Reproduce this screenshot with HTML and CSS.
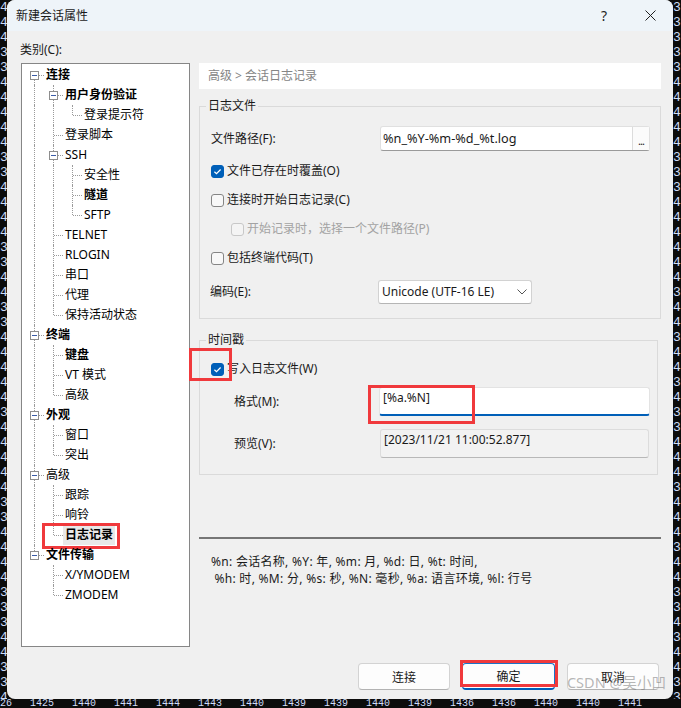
FILE: index.html
```html
<!DOCTYPE html>
<html lang="zh-CN">
<head>
<meta charset="utf-8">
<title>新建会话属性</title>
<link rel="stylesheet" href="styles.css">
</head>
<body>
<div class="screen">
<div class="term term-left">4
4
4
3
3
4
4
4
4
4
3
3
4
4
4
4
3
3
4
4
3
3
4
4
4
4
4
3
4
4
4
4
4
3
3
4
4
4
4
3
3
3
4
4
3
3
4</div>
<div class="dialog">
  <div class="titlebar">
    <span class="title">新建会话属性</span>
    <span class="tb-btn tb-help">?</span>
    <span class="tb-btn"><svg width="11" height="11" viewBox="0 0 11 11"><path d="M0.5 0.5L10.5 10.5M10.5 0.5L0.5 10.5" stroke="#1f1f1f" stroke-width="1" fill="none"/></svg></span>
  </div>
  <div class="content">
    <div class="cat-label">类别(C):</div>
    <div class="tree">
      <div class="row"><span class="c f"><i class="box"></i></span><span class="txt b">连接</span></div>
      <div class="row"><span class="c v"></span><span class="c t"><i class="box"></i></span><span class="txt b">用户身份验证</span></div>
      <div class="row"><span class="c v"></span><span class="c v"></span><span class="c l"></span><span class="txt">登录提示符</span></div>
      <div class="row"><span class="c v"></span><span class="c t"></span><span class="txt">登录脚本</span></div>
      <div class="row"><span class="c v"></span><span class="c t"><i class="box"></i></span><span class="txt">SSH</span></div>
      <div class="row"><span class="c v"></span><span class="c v"></span><span class="c t"></span><span class="txt">安全性</span></div>
      <div class="row"><span class="c v"></span><span class="c v"></span><span class="c t"></span><span class="txt b">隧道</span></div>
      <div class="row"><span class="c v"></span><span class="c v"></span><span class="c l"></span><span class="txt">SFTP</span></div>
      <div class="row"><span class="c v"></span><span class="c t"></span><span class="txt">TELNET</span></div>
      <div class="row"><span class="c v"></span><span class="c t"></span><span class="txt">RLOGIN</span></div>
      <div class="row"><span class="c v"></span><span class="c t"></span><span class="txt">串口</span></div>
      <div class="row"><span class="c v"></span><span class="c t"></span><span class="txt">代理</span></div>
      <div class="row"><span class="c v"></span><span class="c l"></span><span class="txt">保持活动状态</span></div>
      <div class="row"><span class="c t"><i class="box"></i></span><span class="txt b">终端</span></div>
      <div class="row"><span class="c v"></span><span class="c t"></span><span class="txt b">键盘</span></div>
      <div class="row"><span class="c v"></span><span class="c t"></span><span class="txt">VT 模式</span></div>
      <div class="row"><span class="c v"></span><span class="c l"></span><span class="txt">高级</span></div>
      <div class="row"><span class="c t"><i class="box"></i></span><span class="txt b">外观</span></div>
      <div class="row"><span class="c v"></span><span class="c t"></span><span class="txt">窗口</span></div>
      <div class="row"><span class="c v"></span><span class="c l"></span><span class="txt">突出</span></div>
      <div class="row"><span class="c t"><i class="box"></i></span><span class="txt">高级</span></div>
      <div class="row"><span class="c v"></span><span class="c t"></span><span class="txt">跟踪</span></div>
      <div class="row"><span class="c v"></span><span class="c t"></span><span class="txt">响铃</span></div>
      <div class="row"><span class="c v"></span><span class="c l"></span><span class="txt b sel">日志记录</span><span class="mark mark-tree"></span></div>
      <div class="row"><span class="c l"><i class="box"></i></span><span class="txt b">文件传输</span></div>
      <div class="row"><span class="c"></span><span class="c t"></span><span class="txt">X/YMODEM</span></div>
      <div class="row"><span class="c"></span><span class="c l"></span><span class="txt">ZMODEM</span></div>
    </div>
    <div class="panel">
      <div class="crumb">高级 &gt; 会话日志记录</div>
      <fieldset class="group g1">
        <legend>日志文件</legend>
        <div class="gbody gbody1">
          <div class="frow path-row">
            <span class="flabel">文件路径(F):</span>
            <div class="field path-field"><span class="field-text">%n_%Y-%m-%d_%t.log</span><span class="browse">...</span></div>
          </div>
          <div class="chk first"><span class="cb on"><svg width="13" height="13" viewBox="0 0 13 13"><path d="M3.4 6.7L5.5 8.7L9.6 4.5" stroke="#fff" stroke-width="1.2" fill="none"/></svg></span><span>文件已存在时覆盖(O)</span></div>
          <div class="chk"><span class="cb"></span><span>连接时开始日志记录(C)</span></div>
          <div class="chk sub disabled"><span class="cb"></span><span>开始记录时，选择一个文件路径(P)</span></div>
          <div class="chk"><span class="cb"></span><span>包括终端代码(T)</span></div>
          <div class="frow enc-row">
            <span class="flabel enc-label">编码(E):</span>
            <div class="select"><span class="select-text">Unicode (UTF-16 LE)</span><svg width="10" height="6" viewBox="0 0 10 6"><path d="M0.5 0.5L5 5L9.5 0.5" stroke="#555" stroke-width="1" fill="none"/></svg></div>
          </div>
        </div>
      </fieldset>
      <fieldset class="group g2">
        <legend>时间戳</legend>
        <div class="gbody gbody2">
          <div class="chk ts-chk"><span class="cb on"><svg width="13" height="13" viewBox="0 0 13 13"><path d="M3.4 6.7L5.5 8.7L9.6 4.5" stroke="#fff" stroke-width="1.2" fill="none"/></svg></span><span>写入日志文件(W)</span><span class="mark mark-chk"></span></div>
          <div class="frow fmt-row">
            <span class="flabel wide">格式(M):</span>
            <div class="field fmt-field"><span class="field-text">[%a.%N]</span><span class="mark mark-fmt"></span></div>
          </div>
          <div class="frow pv-row">
            <span class="flabel wide">预览(V):</span>
            <div class="field pv-field"><span class="field-text">[2023/11/21 11:00:52.877]</span></div>
          </div>
        </div>
      </fieldset>
      <div class="sep"></div>
      <div class="help">
        <div>%n: 会话名称, %Y: 年, %m: 月, %d: 日, %t: 时间,</div>
        <div class="help2"> %h: 时, %M: 分, %s: 秒, %N: 毫秒, %a: 语言环境, %l: 行号</div>
      </div>
    </div>
  </div>
  <div class="footer">
    <div class="btn w92">连接</div>
    <div class="btn w93 default">确定<span class="mark mark-btn"></span></div>
    <div class="btn w92">取消</div>
    <span class="watermark">CSDN @吴小凹</span>
  </div>
</div>
<div class="term term-right">3
3
3
3
3
4
4
4
4
4
3
3
3
4
4
4
4
4
4
3
4
4
3
4
4
3
4
3
3
4
4
4
3
4
4
4
3
4
4
3
3
4
3
4
4
3
3</div>
<div class="term term-bottom">26   1425   1440   1441   1444   1443   1440   1439   1439   1440   1439   1436   1436   1440   1440   1441</div>
</div>
</body>
</html>
```

FILE: styles.css
```css
html, body {
  margin: 0;
  padding: 0;
  background: #0c0c0c;
}

body {
  font-family: "Noto Sans", "Noto Sans CJK SC", sans-serif;
  font-size: 12px;
  color: #1a1a1a;
}

.screen {
  display: grid;
  grid-template-columns: 7px 666px 8px;
  grid-template-rows: 699px 9px;
  width: 681px;
  height: 708px;
  overflow: hidden;
}

.term {
  font-family: "Liberation Mono", monospace;
  color: #cfdcf8;
  white-space: pre;
  overflow: hidden;
}

.term-left {
  font-size: 13px;
  line-height: 15px;
  text-align: right;
}

.term-right {
  font-size: 13px;
  line-height: 15px;
}

.term-bottom {
  grid-column: 1 / -1;
  font-size: 10px;
  line-height: 10px;
}

/* dialog */
.dialog {
  background: #f0f0f0;
  border-radius: 8px;
  display: flex;
  flex-direction: column;
  overflow: hidden;
  position: relative;
}

.titlebar {
  height: 31px;
  flex: none;
  background: #eef4f9;
  display: flex;
  align-items: center;
}

.title {
  flex: 1;
  padding-left: 9px;
  line-height: 16px;
  color: #1a1a1a;
}

.tb-btn {
  width: 46px;
  height: 31px;
  display: flex;
  align-items: center;
  justify-content: center;
}

.tb-help {
  font-size: 14px;
  color: #1f1f1f;
}

.content {
  display: grid;
  grid-template-columns: 169px 462px;
  grid-template-rows: 21px 584px;
  column-gap: 9px;
  padding: 11px 0 0 14px;
}

.cat-label {
  grid-row: 1;
  grid-column: 1;
  line-height: 16px;
  margin-left: -1px;
}

/* tree */
.tree {
  grid-row: 2;
  grid-column: 1;
  box-sizing: border-box;
  background: #fff;
  border: 1px solid #868686;
  padding: 1px 0 0 3px;
  overflow: hidden;
}

.row {
  display: flex;
  align-items: center;
  height: 20px;
  position: relative;
  color: #000;
}

.c {
  width: 19px;
  height: 20px;
  flex: none;
  position: relative;
}

.c.v::before,
.c.t::before,
.c.l::before,
.c.f::before {
  content: "";
  position: absolute;
  left: 9px;
  border-left: 1px dotted #9a9a9a;
}

.c.v::before,
.c.t::before {
  top: 0;
  bottom: 0;
}

.c.l::before {
  top: 0;
  height: 10px;
}

.c.f::before {
  top: 10px;
  bottom: 0;
}

.c.t::after,
.c.l::after,
.c.f::after {
  content: "";
  position: absolute;
  left: 10px;
  right: 0;
  top: 10px;
  border-top: 1px dotted #9a9a9a;
}

.box {
  position: absolute;
  left: 5px;
  top: 6px;
  width: 9px;
  height: 9px;
  box-sizing: border-box;
  border: 1px solid #8e8e8e;
  background: #fff;
  z-index: 1;
}

.box::after {
  content: "";
  position: absolute;
  left: 1px;
  top: 3px;
  width: 5px;
  height: 1px;
  background: #3a5ca8;
}

.txt {
  padding: 0 2px;
  line-height: 20px;
  white-space: nowrap;
}

.txt.b {
  font-weight: 700;
}

.txt.sel {
  background: #e8e8e8;
}

/* red annotation marks */
.mark {
  position: absolute;
  box-sizing: border-box;
  border: 3px solid #f0393c;
  pointer-events: none;
}

.mark-tree {
  left: 17px;
  top: -2px;
  width: 78px;
  height: 26px;
}

.mark-chk {
  left: -22px;
  top: -11px;
  width: 43px;
  height: 33px;
}

.mark-fmt {
  left: -12px;
  top: -3px;
  width: 107px;
  height: 39px;
}

.mark-btn {
  left: -3px;
  top: -4px;
  width: 98px;
  height: 27px;
}

/* right panel */
.panel {
  grid-row: 2;
  grid-column: 2;
  display: flex;
  flex-direction: column;
}

.crumb {
  height: 26px;
  line-height: 26px;
  background: #fff;
  padding-left: 9px;
  color: #858585;
}

.group {
  box-sizing: border-box;
  margin: 0;
  padding: 0;
  border: 1px solid #dadada;
  min-inline-size: 0;
}

.group legend {
  margin-left: 6px;
  padding: 0 2px;
  line-height: 16px;
  color: #1a1a1a;
}

.g1 {
  width: 462px;
  margin-top: 9px;
}

.g2 {
  width: 459px;
  margin-top: 13px;
}

.gbody {
  display: flex;
  flex-direction: column;
}

.gbody1 {
  padding: 12px 10px 14px 11px;
}

.gbody2 {
  padding: 11px 7px 16px 11px;
}

.frow {
  display: flex;
  align-items: center;
}

.flabel {
  flex: none;
  width: 169px;
  line-height: 16px;
}

.enc-label {
  width: 168px;
  margin-left: -1px;
}

.path-row {
  height: 25px;
}

.field {
  position: relative;
  box-sizing: border-box;
  background: #fff;
  border: 1px solid #e0e0e0;
  border-bottom-color: #9a9a9a;
  border-radius: 3px;
  display: flex;
}

.field-text {
  flex: 1;
  padding-left: 2px;
  white-space: nowrap;
  color: #1a1a1a;
}

.path-field {
  width: 270px;
  height: 25px;
  align-items: center;
}

.path-field .field-text {
  line-height: 23px;
  font-size: 12.7px;
}

.browse {
  flex: none;
  width: 17px;
  height: 23px;
  box-sizing: border-box;
  border-left: 1px solid #dcdcdc;
  background: #fbfbfb;
  text-align: center;
  line-height: 28px;
  font-size: 11px;
  letter-spacing: -1px;
}

.chk {
  display: flex;
  align-items: center;
  gap: 3px;
  height: 20px;
  margin-top: 9px;
  line-height: 16px;
  position: relative;
}

.chk.first {
  margin-top: 10px;
}

.chk.sub {
  padding-left: 20px;
}

.chk.disabled {
  color: #a3a3a3;
}

.cb {
  flex: none;
  width: 13px;
  height: 13px;
  box-sizing: border-box;
  border: 1px solid #858585;
  border-radius: 3px;
  background: #f8f8f8;
  display: flex;
}

.cb svg {
  margin: -1px;
}

.cb.on {
  background: #005fb8;
  border-color: #005fb8;
}

.chk.disabled .cb {
  border-color: #c8c8c8;
  background: #f4f4f4;
}

.enc-row {
  margin-top: 12px;
  height: 24px;
}

.select {
  box-sizing: border-box;
  width: 154px;
  height: 24px;
  background: #fff;
  border: 1px solid #d2d2d2;
  border-bottom-color: #b5b5b5;
  border-radius: 3px;
  display: flex;
  align-items: center;
  padding: 0 4px 0 3px;
}

.select-text {
  flex: 1;
  line-height: 16px;
  white-space: nowrap;
}

.ts-chk {
  margin-top: 0;
}

.flabel.wide {
  width: 145px;
  padding-left: 23px;
}

.fmt-row {
  margin-top: 8px;
  height: 29px;
}

.fmt-field {
  width: 271px;
  height: 29px;
  border-color: #e3e3e3;
  border-bottom: 2px solid #005fb8;
  padding-top: 2px;
}

.fmt-field .field-text,
.pv-field .field-text {
  line-height: 16px;
  padding-left: 3px;
}

.pv-row {
  margin-top: 13px;
  height: 29px;
}

.pv-field {
  width: 269px;
  height: 29px;
  margin-left: 1px;
  background: #f2f2f2;
  border-color: #dcdcdc;
  border-bottom-color: #b8b8b8;
  padding-top: 2px;
}

.sep {
  margin-top: 62px;
  height: 2px;
  background: #767676;
}

.help {
  margin-top: 14px;
  padding-left: 12px;
  line-height: 17px;
  letter-spacing: 0.3px;
  color: #1a1a1a;
}

.help2 {
  white-space: pre;
}

/* footer */
.footer {
  position: relative;
  margin-top: 16px;
  display: flex;
  justify-content: flex-end;
  gap: 12px;
  padding-right: 14px;
}

.btn {
  position: relative;
  box-sizing: border-box;
  height: 27px;
  background: #fdfdfd;
  border: 1px solid #d3d3d3;
  border-bottom-color: #b3b3b3;
  border-radius: 4px;
  display: flex;
  align-items: center;
  justify-content: center;
  color: #1a1a1a;
}

.w92 {
  width: 92px;
}

.w93 {
  width: 93px;
}

.btn.default {
  border-color: #1a73c8;
  border-bottom: 2px solid #005fb8;
}

.watermark {
  position: absolute;
  right: 7px;
  top: 10px;
  line-height: 18px;
  font-size: 14.5px;
  color: rgba(120, 120, 120, 0.55);
  white-space: nowrap;
}
```
